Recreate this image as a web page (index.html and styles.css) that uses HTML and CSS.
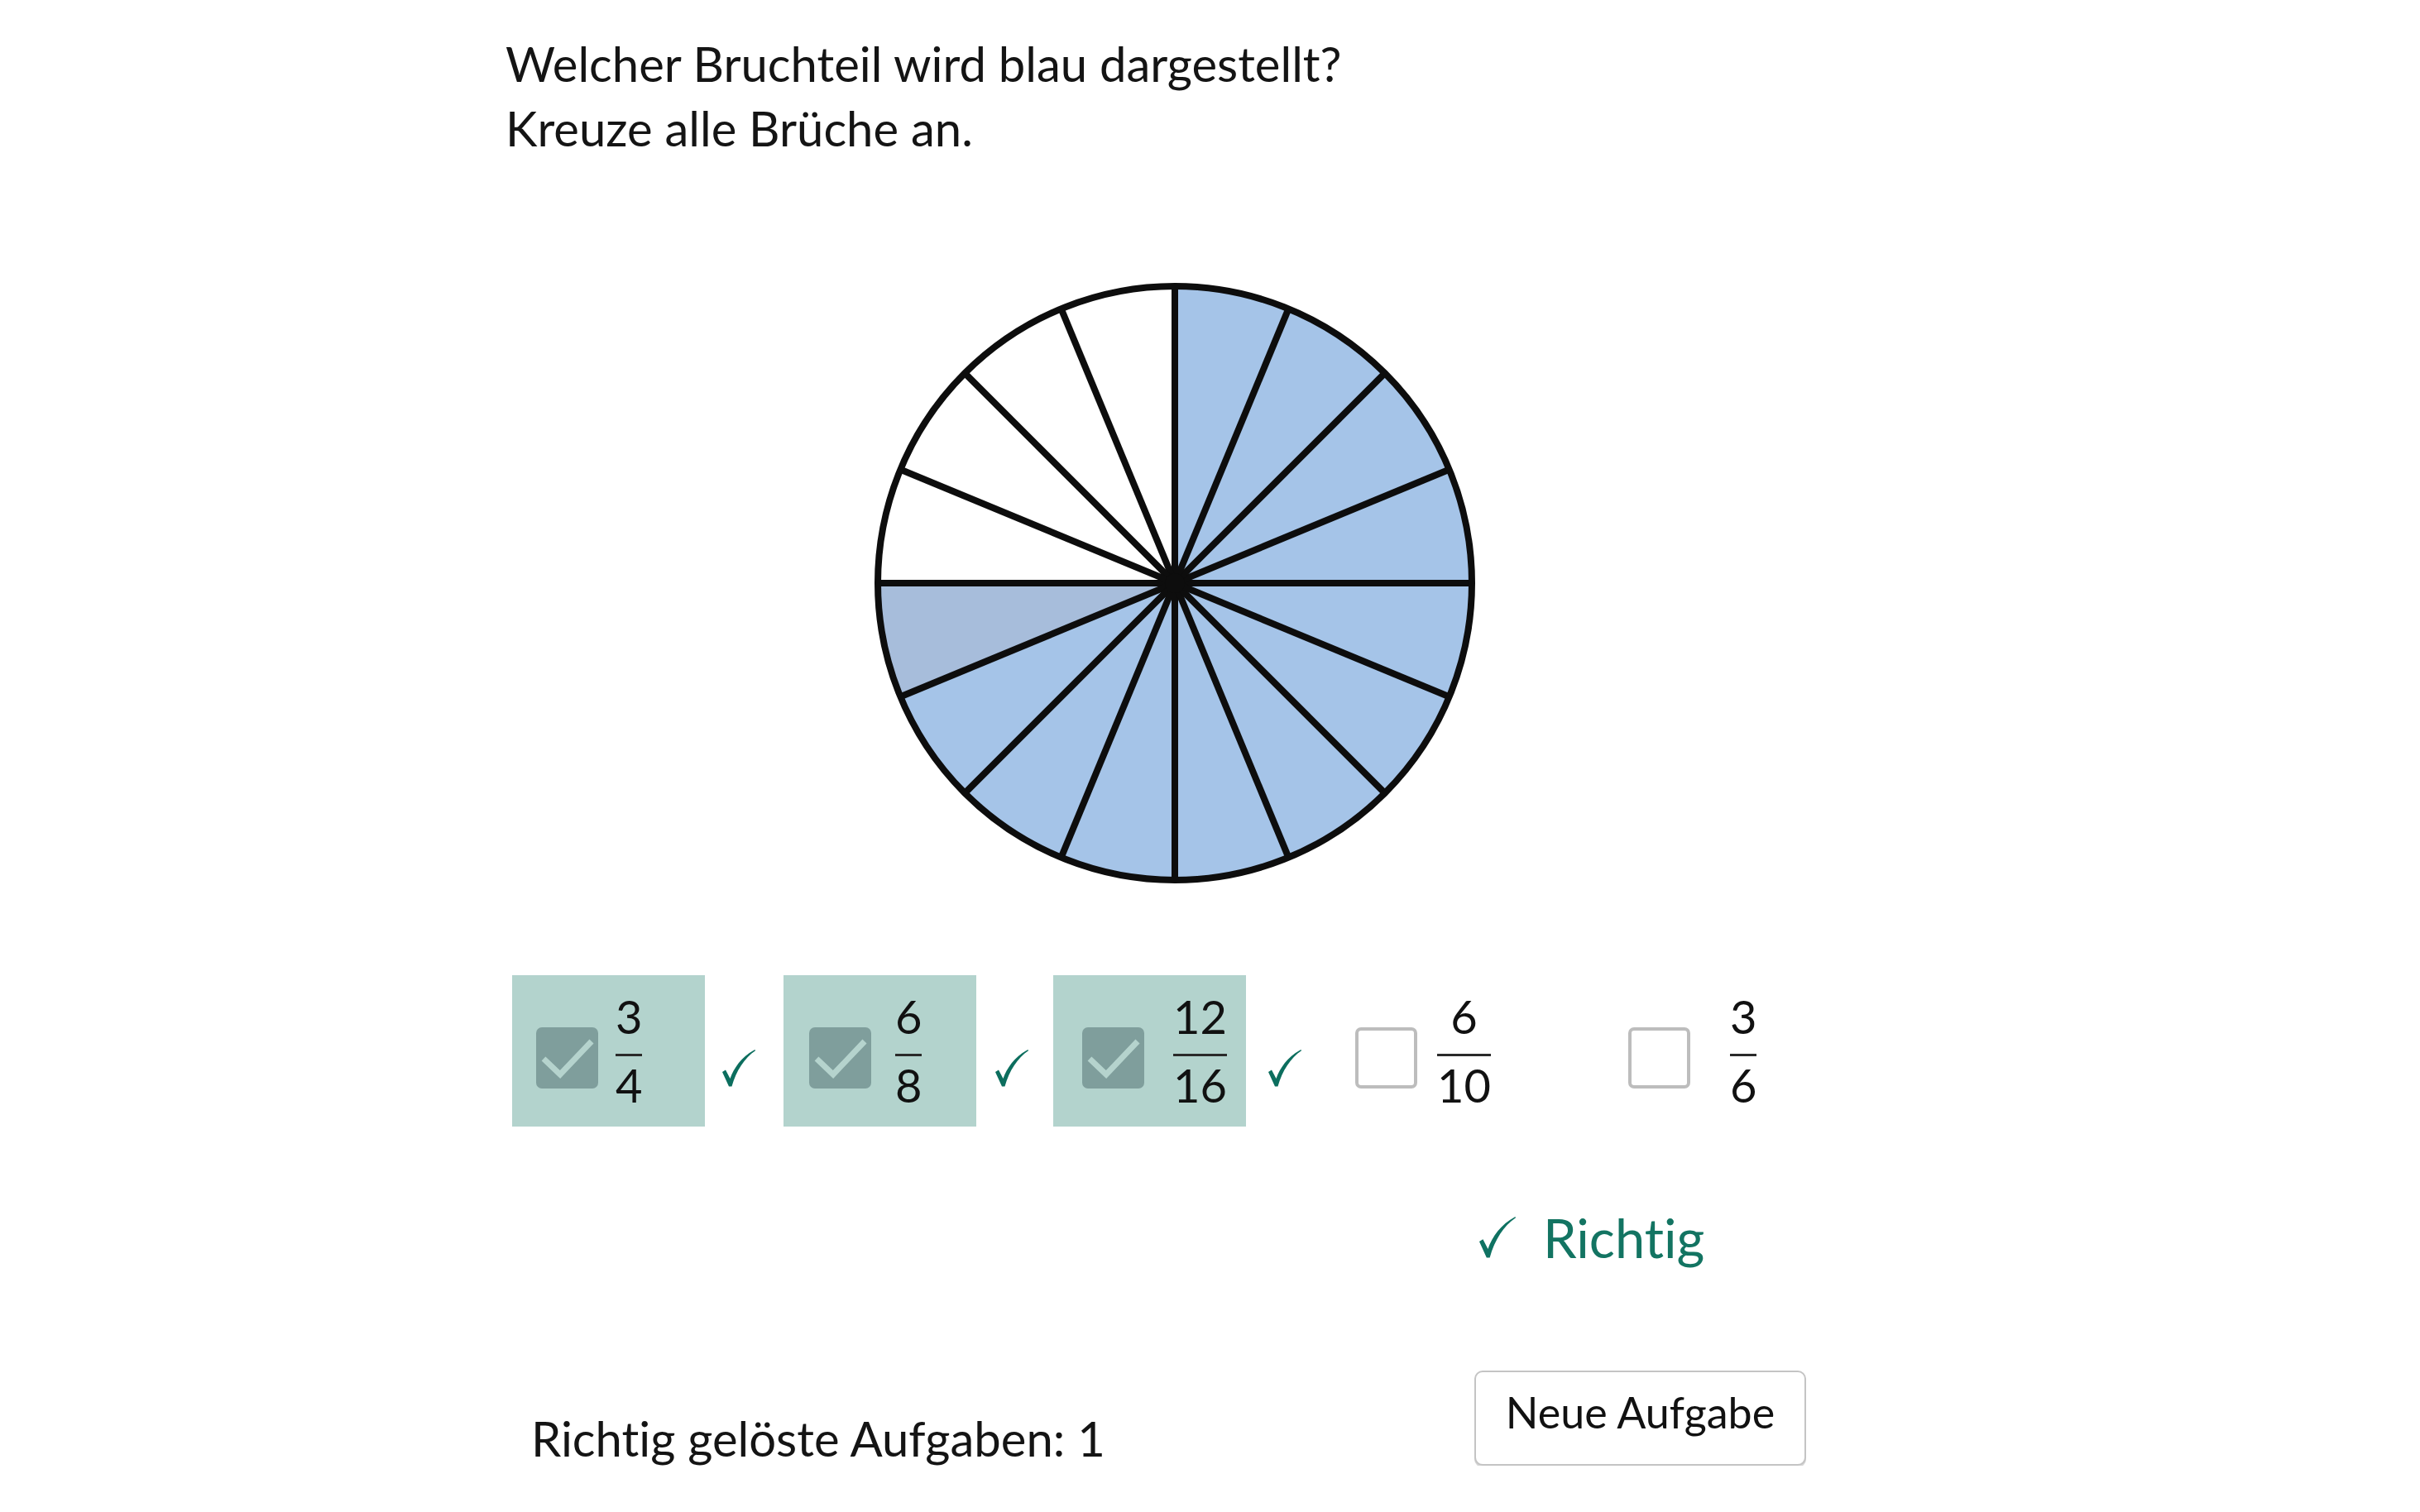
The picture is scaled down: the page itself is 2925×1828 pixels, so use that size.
FILE: index.html
```html
<!DOCTYPE html>
<html lang="de">
<head>
<meta charset="utf-8">
<title>Bruchteile</title>
<link rel="stylesheet" href="styles.css">
</head>
<body>
<main class="page">
  <p class="question">Welcher Bruchteil wird blau dargestellt?<br>Kreuze alle Brüche an.</p>

  <div class="pie-wrap">
    <svg class="pie" width="740" height="740" viewBox="0 0 740 740">
      <circle cx="370" cy="370" r="360" fill="#a5c4e8"/>
      <path d="M370,370 L370,10 A360,360 0 0 0 10,370 Z" fill="#ffffff"/>
      <path d="M370,370 L10,370 A360,360 0 0 0 37.4,507.8 Z" fill="#a7bddb"/>
      <g stroke="#0d0d0d" stroke-width="8">
        <line x1="730" y1="370" x2="10" y2="370"/>
        <line x1="702.6" y1="232.2" x2="37.4" y2="507.8"/>
        <line x1="624.6" y1="115.4" x2="115.4" y2="624.6"/>
        <line x1="507.8" y1="37.4" x2="232.2" y2="702.6"/>
        <line x1="370" y1="10" x2="370" y2="730"/>
        <line x1="232.2" y1="37.4" x2="507.8" y2="702.6"/>
        <line x1="115.4" y1="115.4" x2="624.6" y2="624.6"/>
        <line x1="37.4" y1="232.2" x2="702.6" y2="507.8"/>
      </g>
      <circle cx="370" cy="370" r="12" fill="#0d0d0d"/>
      <circle cx="370" cy="370" r="359" fill="none" stroke="#0d0d0d" stroke-width="8"/>
    </svg>
  </div>

  <div class="options">
    <div class="option">
      <div class="opt-box selected">
        <span class="checkbox checked"><svg viewBox="0 0 75 74" width="75" height="74"><path d="M9,38 L29,57 L67,17" fill="none" stroke="#b5d3cd" stroke-width="7"/></svg></span>
        <span class="frac"><span class="num">3</span><span class="bar"></span><span class="den">4</span></span>
      </div>
      <svg class="mark" viewBox="0 0 40 45" width="40" height="45"><path d="M0,27 L4,24.5 L9.5,35 C14,22 24,8 39.5,0 L40,1.2 C27,10 17,25 11.5,44.5 L8,44.5 Z" fill="#0c6e5e"/></svg>
    </div>
    <div class="option">
      <div class="opt-box selected">
        <span class="checkbox checked"><svg viewBox="0 0 75 74" width="75" height="74"><path d="M9,38 L29,57 L67,17" fill="none" stroke="#b5d3cd" stroke-width="7"/></svg></span>
        <span class="frac"><span class="num">6</span><span class="bar"></span><span class="den">8</span></span>
      </div>
      <svg class="mark" viewBox="0 0 40 45" width="40" height="45"><path d="M0,27 L4,24.5 L9.5,35 C14,22 24,8 39.5,0 L40,1.2 C27,10 17,25 11.5,44.5 L8,44.5 Z" fill="#0c6e5e"/></svg>
    </div>
    <div class="option">
      <div class="opt-box selected">
        <span class="checkbox checked"><svg viewBox="0 0 75 74" width="75" height="74"><path d="M9,38 L29,57 L67,17" fill="none" stroke="#b5d3cd" stroke-width="7"/></svg></span>
        <span class="frac"><span class="num">12</span><span class="bar"></span><span class="den">16</span></span>
      </div>
      <svg class="mark" viewBox="0 0 40 45" width="40" height="45"><path d="M0,27 L4,24.5 L9.5,35 C14,22 24,8 39.5,0 L40,1.2 C27,10 17,25 11.5,44.5 L8,44.5 Z" fill="#0c6e5e"/></svg>
    </div>
    <div class="option">
      <div class="opt-box">
        <span class="checkbox"></span>
        <span class="frac"><span class="num">6</span><span class="bar"></span><span class="den">10</span></span>
      </div>
    </div>
    <div class="option">
      <div class="opt-box">
        <span class="checkbox"></span>
        <span class="frac"><span class="num">3</span><span class="bar"></span><span class="den">6</span></span>
      </div>
    </div>
  </div>

  <div class="feedback">
    <svg class="feedback-mark" viewBox="0 0 40 45" width="44" height="50" preserveAspectRatio="none"><path d="M0,27 L4,24.5 L9.5,35 C14,22 24,8 39.5,0 L40,1.2 C27,10 17,25 11.5,44.5 L8,44.5 Z" fill="#0f7262"/></svg><span class="feedback-text">Richtig</span>
  </div>

  <div class="footer">
    <div class="count">Richtig gelöste Aufgaben: 1</div>
    <button class="new-task" type="button">Neue Aufgabe</button>
  </div>
</main>
</body>
</html>
```

FILE: styles.css
```css
html, body {
  margin: 0;
  padding: 0;
  background: #ffffff;
}

body {
  font-family: Lato, "Open Sans", "DejaVu Sans", sans-serif;
  font-variant-ligatures: none;
  color: #141414;
}

.page {
  width: 1612px;
  padding-left: 614px;
}

.question {
  margin: 0 0 0 -3px;
  padding-top: 38px;
  font-size: 58px;
  line-height: 78px;
}

.pie-wrap {
  margin-top: 141px;
  display: flex;
  justify-content: center;
}

.pie {
  display: block;
}

.options {
  margin-top: 104px;
  margin-left: 5px;
  display: flex;
}

.option {
  width: 330px;
  height: 183px;
  display: flex;
  flex: none;
}

.option:nth-child(2) .opt-box { margin-left: -2px; }
.option:nth-child(3) .opt-box { margin-left: -6px; }
.option:nth-child(2) .mark { margin-left: 23px; }
.option:nth-child(3) .mark { margin-left: 27px; }

.opt-box {
  width: 233px;
  height: 183px;
  box-sizing: border-box;
  padding: 16px 0 0 29px;
  display: flex;
  align-items: center;
  flex: none;
}

.opt-box.selected {
  background: #b3d3cd;
}

.checkbox {
  width: 75px;
  height: 74px;
  box-sizing: border-box;
  border-radius: 7px;
  border: 4px solid #bdbdbd;
  background: #ffffff;
  flex: none;
  display: block;
}

.checkbox.checked {
  border: none;
  background: #7f9e9c;
}

.option:nth-child(2) .checkbox { margin-left: 2px; }
.option:nth-child(3) .checkbox { margin-left: 6px; }

.checkbox svg {
  display: block;
}

.frac {
  display: inline-flex;
  flex-direction: column;
  align-items: center;
  font-size: 56px;
  line-height: 1;
  color: #111111;
  padding: 0 3px;
  margin-top: -17px;
}

.option:nth-child(1) .frac { margin-left: 18px; }
.option:nth-child(2) .frac { margin-left: 26px; }
.option:nth-child(3) .frac { margin-left: 32px; }
.option:nth-child(4) .frac { margin-left: 21px; }
.option:nth-child(5) .frac { margin-left: 45px; }

.num {
  padding-bottom: 17px;
}

.bar {
  align-self: stretch;
  height: 3px;
  background: #2a2a2a;
}

.den {
  margin-top: 7px;
}

.mark {
  margin-left: 21px;
  margin-top: 90px;
  flex: none;
}

.feedback {
  margin-top: 102px;
  margin-left: 1174px;
  font-size: 65px;
  line-height: 1;
  color: #137462;
  white-space: nowrap;
}

.feedback-mark {
  vertical-align: baseline;
  margin-right: 33px;
}

.footer {
  margin-top: 128px;
  display: flex;
  align-items: flex-start;
}

.count {
  width: 1168px;
  box-sizing: border-box;
  padding-left: 28px;
  margin-top: 53px;
  font-size: 58px;
  line-height: 1;
  color: #141414;
  white-space: nowrap;
}

.new-task {
  width: 401px;
  height: 115px;
  box-sizing: border-box;
  border: 2px solid #c4c4c4;
  border-radius: 10px;
  box-shadow: 0 2px 0 #d6d6d6;
  background: #ffffff;
  font-family: Lato, "Open Sans", "DejaVu Sans", sans-serif;
  font-variant-ligatures: none;
  font-size: 52px;
  line-height: 1;
  color: #111111;
  padding: 0 0 16px;
  cursor: pointer;
}
```
